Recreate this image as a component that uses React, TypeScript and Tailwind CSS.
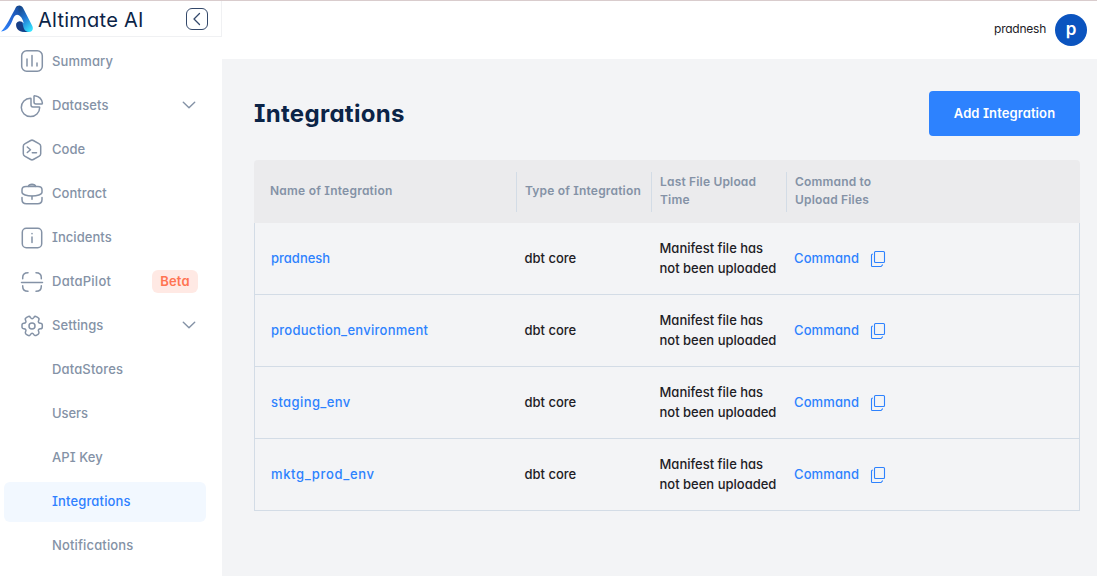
import type { ReactNode } from "react";

const iconProps = {
  width: 24,
  height: 24,
  viewBox: "0 0 24 24",
  fill: "none",
  stroke: "currentColor",
  strokeWidth: 1.5,
  strokeLinecap: "round" as const,
  strokeLinejoin: "round" as const,
};

const SummaryIcon = () => (
  <svg {...iconProps} className="mb-0.5">
    <rect x="1.7" y="1.7" width="20.6" height="20.6" rx="5" />
    <path d="M7 10v7M12 6.5V17M17 14v3" />
  </svg>
);

const DatasetsIcon = () => (
  <svg {...iconProps}>
    <path d="M10.3 4.2a9.2 9.2 0 1 0 9.4 9.3c0-.4-.2-.6-.6-.6h-6.3c-1.1 0-1.8-.7-1.8-1.8V4.8c0-.4-.3-.6-.7-.6Z" />
    <path d="M14 2.4c0-.5.4-.8.9-.7 4 .6 7 3.6 7.5 7.5.1.5-.3.9-.8.9h-5.600c-1.300 0-2-.7-2-2Z" />
  </svg>
);

const CodeIcon = () => (
  <svg {...iconProps}>
    <path d="M10.700 2.500a2.600 2.600 0 0 1 2.600 0l6 3.400a2.600 2.600 0 0 1 1.400 2.300v7.600a2.600 2.600 0 0 1-1.400 2.300l-6 3.400a2.600 2.600 0 0 1-2.600 0l-6-3.400a2.600 2.600 0 0 1-1.400-2.300V8.200a2.600 2.600 0 0 1 1.400-2.300Z" />
    <path d="m7.300 9 3.200 2.700-3.200 2.800M12.300 14.700h4.200" />
  </svg>
);

const ContractIcon = () => (
  <svg {...iconProps}>
    <path d="M8.300 4.400c.5-1.700 1.400-2.200 3.700-2.200s3.200.5 3.700 2.200" />
    <path d="M8.500 3.900c.6-1.200 1.400-1.600 3.500-1.600s2.900.4 3.500 1.600Z" fill="currentColor" fillOpacity=".5" stroke="none" />
    <path d="M6 4.500h12c2.400 0 4 1 4 3.200v2.500c0 2.300-5 3.900-10 3.900S2 12.500 2 10.200V7.700c0-2.200 1.600-3.200 4-3.200Z" />
    <path d="M2 15.500v2c0 2.800 1.500 4.200 4.300 4.200h11.400c2.800 0 4.300-1.400 4.300-4.200v-2M12 14.300v2.900" />
  </svg>
);

const IncidentsIcon = () => (
  <svg {...iconProps}>
    <rect x="2.300" y="2.300" width="19.400" height="19.400" rx="4" />
    <path d="M12 11v5.500M12 7.400v.3" />
  </svg>
);

const DataPilotIcon = () => (
  <svg {...iconProps}>
    <path d="M2.700 8.800V7.500c0-3.200 1.700-4.800 5.300-4.800M16 2.700c3.600 0 5.300 1.600 5.300 4.800v1.300M1.500 12.500h21M2.700 15.700v.8c0 3.200 1.700 4.800 5.300 4.800M16 21.300c3.600 0 5.300-1.600 5.300-4.800v-.8" />
  </svg>
);

const SettingsIcon = () => (
  <svg {...iconProps}>
    <circle cx="12" cy="12" r="3" />
    <path d="M2 12.900v-1.800c0-1 .9-1.900 1.900-1.900 1.800 0 2.600-1.300 1.700-2.900-.5-.9-.2-2.100.7-2.600l1.700-1c.8-.5 1.900-.2 2.400.6l.1.200c.9 1.600 2.400 1.600 3.300 0l.1-.2c.5-.8 1.600-1.100 2.400-.6l1.700 1c.9.5 1.200 1.700.7 2.600-.9 1.600-.1 2.900 1.700 2.900 1 0 1.900.8 1.900 1.900v1.800c0 1-.9 1.900-1.900 1.900-1.800 0-2.600 1.300-1.700 2.900.5.900.2 2.100-.7 2.600l-1.700 1c-.8.500-1.900.2-2.400-.6l-.1-.2c-.9-1.600-2.400-1.600-3.300 0l-.1.200c-.5.800-1.600 1.100-2.400.6l-1.700-1c-.9-.5-1.200-1.700-.7-2.600.9-1.600.1-2.900-1.700-2.900-1 0-1.900-.9-1.900-1.900Z" />
  </svg>
);

const ChevronDown = () => (
  <svg width="14" height="14" viewBox="0 0 14 14" fill="none" stroke="currentColor" strokeWidth="1.4" strokeLinecap="round" strokeLinejoin="round">
    <path d="m1.300 4.200 5.700 5.600 5.700-5.600" />
  </svg>
);

const CopyIcon = () => (
  <svg width="16" height="18" viewBox="0 0 16 18" fill="none" stroke="currentColor" strokeWidth="1.1" strokeLinejoin="round">
    <rect x="4.500" y="1.500" width="10" height="11" rx="1" />
    <path d="M2.300 4.200 1.500 5v10.700c0 .5.300.8.800.8h8.800l1.400-1.600" strokeLinecap="round" />
  </svg>
);

const Logo = () => (
  <svg width="34" height="28" viewBox="0 0 34 28">
    <defs>
      <linearGradient id="wing" x1="0" y1="1" x2="1" y2="0">
        <stop offset="0" stopColor="#2f86ff" />
        <stop offset=".55" stopColor="#2464cf" />
        <stop offset="1" stopColor="#164a94" />
      </linearGradient>
      <linearGradient id="side" x1=".2" y1="0" x2=".8" y2="1">
        <stop offset="0" stopColor="#143f7d" />
        <stop offset=".5" stopColor="#2277d4" />
        <stop offset="1" stopColor="#36e5ff" />
      </linearGradient>
    </defs>
    <path d="M15.500 3c1.800-3.200 6-3.200 7.700.2l9 17.500c1.600 3.400.2 6.300-3.500 6.300H23c-3-1-4-3-5.500-8.500Z" fill="url(#side)" />
    <path d="M16.500 17c-1.500 5.500 1 10 8.500 10h3.500c-3.500-.5-4.700-3-5.500-6.500L21.500 14Z" fill="#183e86" />
    <path d="M17.500 9.500c3 1 5.300 4 6.300 9-1.800-2.300-4.300-2.800-6.300-1.500-2 1.300-2.500 3.500-5 5.500-1.300 1-3 1.500-4.500 1.500 3.500-4 4.500-14.500 9.500-14.500Z" fill="#fff" />
    <path d="M1 26.500C6.500 21.500 10.500 12 14.500 5c1.500-2.700 3-4 5.300-3.900C17.500 3 18 6 21.500 10.500c-4-2-6.800-.5-8.300 3C10.500 20 8.500 25.500 1 26.500Z" fill="url(#wing)" />
  </svg>
);

type NavItem = {
  label: string;
  icon?: ReactNode;
  chevron?: boolean;
  beta?: boolean;
  active?: boolean;
  text: string;
};

const nav: NavItem[] = [
  { label: "Summary", icon: <SummaryIcon />, text: "tracking-[0.15px] pb-[3px]" },
  { label: "Datasets", icon: <DatasetsIcon />, chevron: true, text: "tracking-[0.1px] pb-0.5" },
  { label: "Code", icon: <CodeIcon />, text: "tracking-[0px] pb-0.5" },
  { label: "Contract", icon: <ContractIcon />, text: "tracking-[0.05px] pb-0.5" },
  { label: "Incidents", icon: <IncidentsIcon />, text: "tracking-[0.05px] pb-0.5" },
  { label: "DataPilot", icon: <DataPilotIcon />, beta: true, text: "tracking-[0.25px] pb-0.5" },
  { label: "Settings", icon: <SettingsIcon />, chevron: true, text: "tracking-[0.1px] pb-0.5" },
  { label: "DataStores", text: "tracking-[0.15px] pb-0.5" },
  { label: "Users", text: "tracking-[-0.1px] pb-0.5" },
  { label: "API Key", text: "tracking-[0.1px] pb-0.5" },
  { label: "Integrations", active: true, text: "tracking-[0.15px] pb-0.5" },
  { label: "Notifications", text: "tracking-[0.15px] pb-0.5" },
];

const rows = [
  { name: "pradnesh", tracking: "tracking-[0px]" },
  { name: "production_environment", tracking: "tracking-[0.27px]" },
  { name: "staging_env", tracking: "tracking-[0.4px]" },
  { name: "mktg_prod_env", tracking: "tracking-[0.65px]" },
];

const columns = "grid grid-cols-[262px_135px_135px_1fr]";

function Sidebar() {
  return (
    <aside className="flex w-[222px] shrink-0 flex-col bg-white">
      <div className="flex h-9 items-center border-b border-r border-[#f0f1f3]">
        <Logo />
        <span className="ml-1 mt-0.5 text-[20px] leading-6 tracking-[0.25px] text-[#0b2447] [font-feature-settings:'cv11']">
          Altimate AI
        </span>
        <button className="ml-auto mr-[13px] flex size-[22px] items-center justify-center rounded-md border border-[#33486a] text-[#33486a]">
          <svg width="10" height="14" viewBox="0 0 10 14" fill="none" stroke="currentColor" strokeWidth="1.300" strokeLinecap="round" strokeLinejoin="round">
            <path d="M7.500 1.500 2 7l5.500 5.500" />
          </svg>
        </button>
      </div>
      <nav className="mt-[5px] flex flex-col gap-1 pl-1 pr-4">
        {nav.map((item) => (
          <a
            key={item.label}
            className={`flex h-10 shrink-0 items-center rounded-md text-[13px] font-medium ${
              item.active ? "bg-[#f2f8ff] text-[#2f80ff]" : "text-[#8492a6]"
            }`}
          >
            <span className="ml-4 flex w-8 items-center">{item.icon}</span>
            <span className={`leading-5 ${item.text}`}>{item.label}</span>
            {item.chevron && (
              <span className="ml-auto mr-[10.5px] pb-0.5">
                <ChevronDown />
              </span>
            )}
            {item.beta && (
              <span className="mb-px ml-auto mr-2 flex h-[23px] w-[46px] items-center justify-center rounded-md bg-[#ffe9e4] font-semibold tracking-[0.2px] text-[#ff7452]">
                Beta
              </span>
            )}
          </a>
        ))}
      </nav>
    </aside>
  );
}

export default function App() {
  return (
    <div className="flex h-[576px] w-[1097px] flex-col overflow-hidden border-t border-[#d9cccd] bg-white font-['Inter','Open_Sans',sans-serif] [font-feature-settings:'cv08','cv11']">
      <div className="flex min-h-0 flex-1">
        <Sidebar />
        <main className="flex flex-1 flex-col bg-[#f3f4f6]">
          <header className="flex h-[58px] items-center justify-end gap-[9px] bg-white text-[#1d2025]">
            <span className="pb-0.5 text-xs tracking-[-0.25px]">pradnesh</span>
            <span className="mr-2.5 flex size-8 items-center justify-center rounded-full bg-[#0b54bf] text-[17px] font-semibold text-white">
              p
            </span>
          </header>
          <section className="flex flex-col pl-8 pr-[17px] pt-8">
            <div className="flex h-[45px] items-center justify-between">
              <h1 className="text-2xl font-bold tracking-[0.3px] text-[#0b2447]">Integrations</h1>
              <button className="h-[45px] w-[151px] rounded bg-[#2d82fe] text-[13px] font-semibold tracking-[0.1px] text-white">
                Add Integration
              </button>
            </div>
            <div className="mt-6">
              <div className={`${columns} h-[63px] items-center rounded-t bg-[#ebebed] text-xs font-semibold leading-[18px] tracking-[0.23px] text-[#8492a6]`}>
                <div className="pb-0.5 pl-4">Name of Integration</div>
                <div className="flex h-10 items-center border-l border-[#d3dce6] pb-0.5 pl-2 tracking-[0.18px]">Type of Integration</div>
                <div className="flex h-10 items-center border-l border-[#d3dce6] pb-0.5 pl-2 tracking-[0.18px]">
                  Last File Upload
                  <br />
                  Time
                </div>
                <div className="flex h-10 items-center border-l border-[#d3dce6] pb-0.5 pl-2 tracking-[0.18px]">
                  Command to
                  <br />
                  Upload Files
                </div>
              </div>
              {rows.map(({ name, tracking }) => (
                <div key={name} className={`${columns} h-[72px] items-center border-x border-b border-[#d3dce6] text-[13px] font-medium leading-5 text-[#1d2025]`}>
                  <a className={`pb-0.5 pl-4 text-[#2d82fe] ${tracking}`}>{name}</a>
                  <span className="pb-0.5 pl-[7.5px] tracking-[0px]">dbt core</span>
                  <span className="pb-0.5 pl-[7.5px] tracking-[0px]">
                    Manifest file has
                    <br />
                    not been uploaded
                  </span>
                  <span className="flex items-center pl-[7px] text-[#2d82fe]">
                    <span className="w-[76px] pb-0.5 tracking-[0.1px]">Command</span>
                    <CopyIcon />
                  </span>
                </div>
              ))}
            </div>
          </section>
        </main>
      </div>
    </div>
  );
}
